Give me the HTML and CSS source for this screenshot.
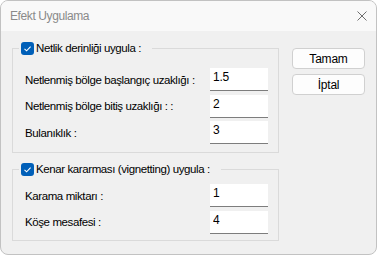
FILE: index.html
```html
<!DOCTYPE html>
<html lang="tr">
<head>
    <meta charset="UTF-8">
    <meta name="viewport" content="width=device-width, initial-scale=1.0">
    <title>Efekt Uygulama</title>
    <link rel="stylesheet" href="styles.css">
</head>
<body>
    <div class="window">
        <div class="titlebar">
            <span class="title">Efekt Uygulama</span>
            <svg class="close-icon" width="10" height="10" viewBox="0 0 10 10">
                <path d="M0.5 0.5 L9.5 9.5 M9.5 0.5 L0.5 9.5" stroke="#6e6e6e" stroke-width="1" fill="none"/>
            </svg>
        </div>

        <div class="content">
            <div class="groups">
                <fieldset class="group group-focus">
                    <legend>
                        <span class="check">
                            <svg width="13" height="13" viewBox="0 0 13 13">
                                <path d="M3.5 6.8 L5.6 8.8 L9.6 4.6" stroke="#ffffff" stroke-width="1.1" fill="none"/>
                            </svg>
                        </span>
                        Netlik derinliği uygula :
                    </legend>
                    <div class="rows">
                        <div class="row">
                            <label>Netlenmiş bölge başlangıç uzaklığı :</label>
                            <input type="text" value="1.5">
                        </div>
                        <div class="row">
                            <label>Netlenmiş bölge bitiş uzaklığı : :</label>
                            <input type="text" value="2">
                        </div>
                        <div class="row">
                            <label>Bulanıklık :</label>
                            <input type="text" value="3">
                        </div>
                    </div>
                </fieldset>

                <fieldset class="group group-vignette">
                    <legend>
                        <span class="check">
                            <svg width="13" height="13" viewBox="0 0 13 13">
                                <path d="M3.5 6.8 L5.6 8.8 L9.6 4.6" stroke="#ffffff" stroke-width="1.1" fill="none"/>
                            </svg>
                        </span>
                        Kenar kararması (vignetting) uygula :
                    </legend>
                    <div class="rows">
                        <div class="row">
                            <label>Karama miktarı :</label>
                            <input type="text" value="1">
                        </div>
                        <div class="row">
                            <label>Köşe mesafesi :</label>
                            <input type="text" value="4">
                        </div>
                    </div>
                </fieldset>
            </div>

            <div class="buttons">
                <button class="btn">Tamam</button>
                <button class="btn">İptal</button>
            </div>
        </div>
    </div>
</body>
</html>
```

FILE: styles.css
```css
* {
    margin: 0;
    padding: 0;
    box-sizing: border-box;
}

body {
    background: #ffffff;
    font-family: 'Liberation Sans', Arial, sans-serif;
    font-size: 11.5px;
    letter-spacing: -0.4px;
    color: #000000;
}

.window {
    width: 377px;
    height: 255px;
    border: 1px solid #c2c2c2;
    border-radius: 8px;
    overflow: hidden;
    background: #f0f0f0;
}

.titlebar {
    height: 30px;
    background: #f9f9f9;
    display: flex;
    align-items: center;
    justify-content: space-between;
    padding: 0 9px 0 9px;
}

.title {
    color: #8a8a8a;
    font-size: 12px;
}

.close-icon {
    display: block;
}

.content {
    display: flex;
    padding: 10px 0 0 11px;
}

.groups {
    width: 267px;
}

.group {
    border: 1px solid #dadada;
    padding: 0;
    margin: 0;
    min-width: 0;
}

.group-vignette {
    margin-top: 9px;
}

.group legend {
    display: flex;
    align-items: center;
    height: 15px;
    margin-left: 6px;
    padding: 0 11px 0 2px;
    line-height: 15px;
    white-space: nowrap;
}

.check {
    display: block;
    width: 13px;
    height: 13px;
    border-radius: 3px;
    background: #005fb8;
    margin-right: 2px;
}

.check svg {
    display: block;
}

.rows {
    display: flex;
    flex-direction: column;
    gap: 3.5px;
    padding: 12px 10px 8px 12px;
}

.group-vignette .rows {
    padding-top: 7px;
    padding-bottom: 6px;
}

.row {
    display: flex;
    align-items: center;
    justify-content: space-between;
}

.row label {
    white-space: nowrap;
}

.row input {
    width: 58px;
    height: 23px;
    border: none;
    border-bottom: 1px solid #7d7d7d;
    background: #ffffff;
    padding: 1px 3px 5px 3px;
    font-family: 'Liberation Sans', Arial, sans-serif;
    font-size: 12px;
    letter-spacing: -0.2px;
    color: #000000;
    outline: none;
}

.buttons {
    display: flex;
    flex-direction: column;
    gap: 5px;
    margin-left: 13px;
    margin-top: 7px;
}

.btn {
    width: 73px;
    height: 21px;
    border: 1px solid #d0d0d0;
    border-radius: 4px;
    background: #fdfdfd;
    font-family: 'Liberation Sans', Arial, sans-serif;
    font-size: 12px;
    letter-spacing: -0.2px;
    color: #000000;
}
```
